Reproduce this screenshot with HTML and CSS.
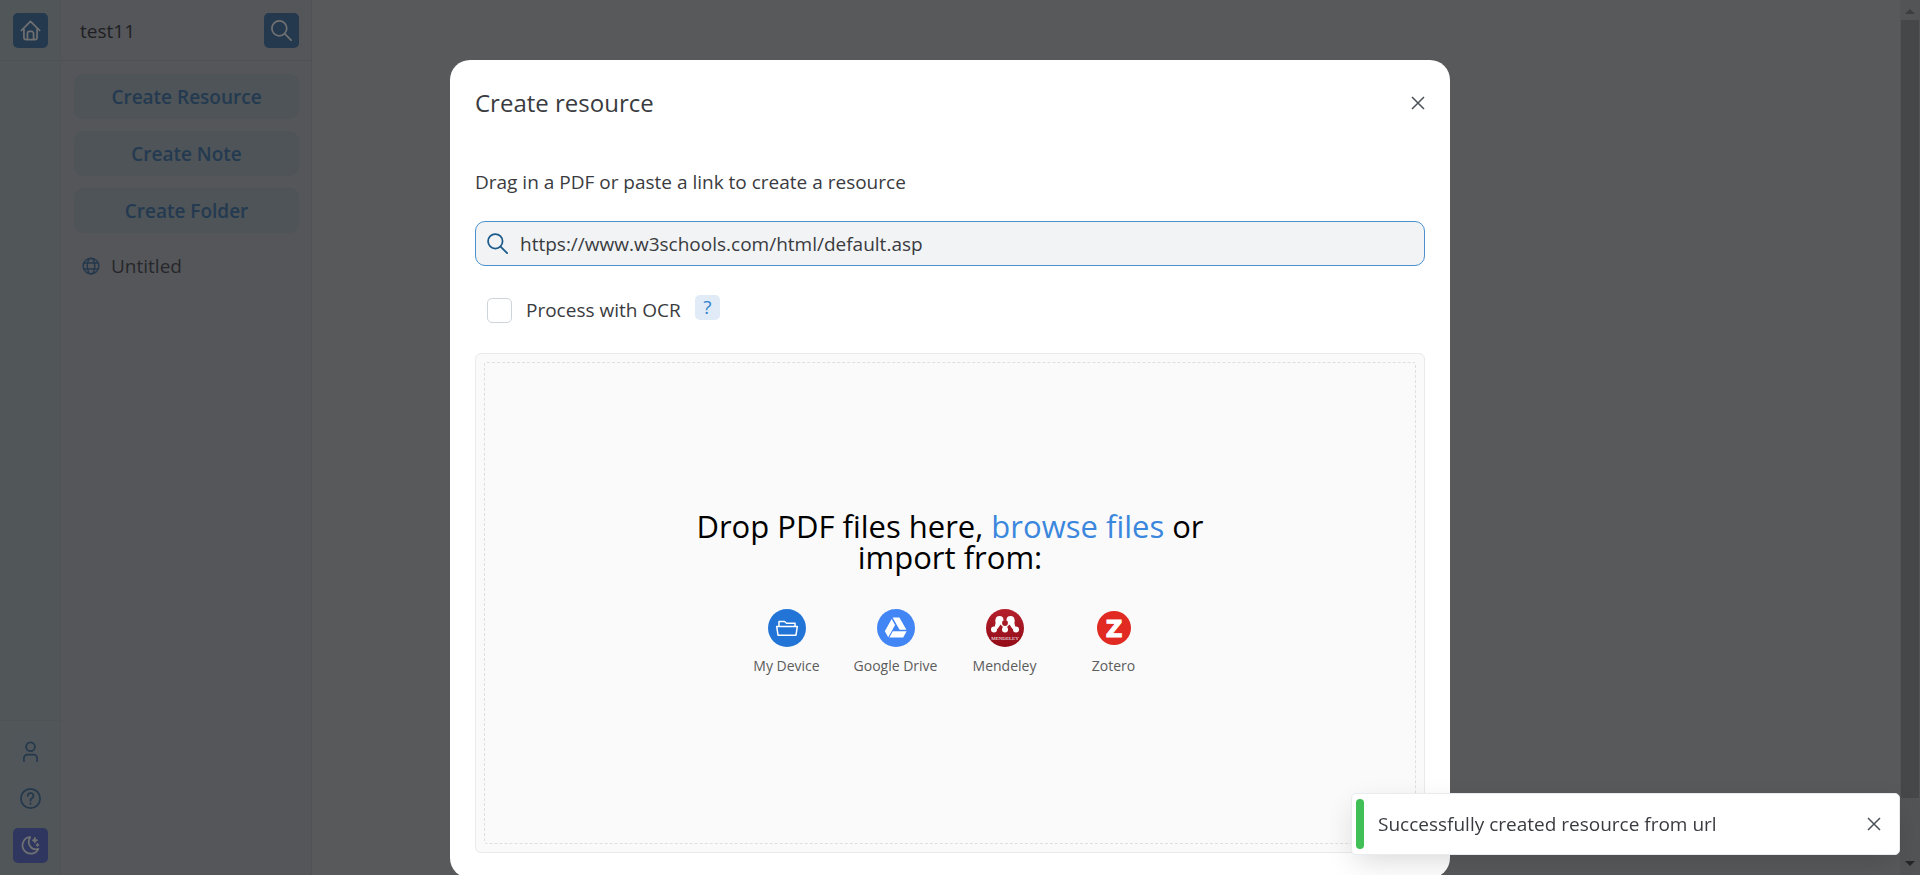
FILE: index.html
```html
<!DOCTYPE html>
<html lang="en">
<head>
<meta charset="utf-8">
<title>test11</title>
<link rel="stylesheet" href="styles.css">
</head>
<body>
<div class="app">
  <nav class="rail">
    <div class="rail-top">
      <button class="icon-btn solid" aria-label="Home">
        <svg class="icon" viewBox="0 0 24 24"><path d="M1.500 12 12 1.500 22.500 12M4.500 10v10a2.500 2.500 0 0 0 2.500 2.500h10a2.500 2.500 0 0 0 2.500-2.500V10M8.500 22v-6.500a2.500 2.500 0 0 1 2.500-2.500h2a2.500 2.500 0 0 1 2.500 2.500v6.500"/></svg>
      </button>
    </div>
    <div class="rail-bottom">
      <button class="icon-btn soft" aria-label="Profile">
        <svg class="icon" viewBox="0 0 24 24"><circle cx="12" cy="6.500" r="5"/><path d="M4.500 23v-3.500a4 4 0 0 1 4-4h7a4 4 0 0 1 4 4V23"/></svg>
      </button>
      <button class="icon-btn soft" aria-label="Help">
        <svg class="icon" viewBox="0 0 24 24"><circle cx="12" cy="12" r="11"/><path d="M8.900 9a3.200 3.200 0 1 1 4.600 2.800c-1 .5-1.500 1.200-1.500 2.700M12 17.700v.5"/></svg>
      </button>
      <button class="icon-btn night" aria-label="Dark mode">
        <svg class="icon" viewBox="0 0 24 24"><path d="M10.500 2.500A9.500 9.500 0 1 0 21 15.800 C13 18.500 7 9.500 11.700 2.500z"/><path class="fill" d="m17 2.800 1 2.200 2.200 1-2.200 1-1 2.200-1-2.200-2.200-1 2.200-1zM20 9.500l.6 1.300 1.300.6-1.300.6-.6 1.300-.6-1.300-1.300-.6 1.300-.6z"/></svg>
      </button>
    </div>
  </nav>
  <aside class="sidebar">
    <header class="side-head">
      <h1 class="project">test11</h1>
      <button class="icon-btn solid" aria-label="Search">
        <svg class="icon" viewBox="0 0 24 24"><circle cx="9.500" cy="9.500" r="8.500"/><path d="m15.800 15.800 7.200 7.200"/></svg>
      </button>
    </header>
    <div class="side-body">
      <button class="create">Create Resource</button>
      <button class="create">Create Note</button>
      <button class="create">Create Folder</button>
      <a class="item" href="#untitled">
        <svg class="globe" viewBox="0 0 24 24"><circle cx="12" cy="12" r="10.500"/><ellipse cx="12" cy="12" rx="5" ry="10.500"/><path d="M2 8h20M2 16h20"/></svg>
        Untitled
      </a>
    </div>
  </aside>
  <main class="content"></main>
  <div class="scroll" aria-hidden="true">
    <i class="arrow up"></i>
    <i class="thumb"></i>
    <i class="arrow down"></i>
  </div>
</div>

<div class="overlay">
  <section class="modal" role="dialog" aria-labelledby="modal-title">
    <header class="modal-head">
      <h2 class="modal-title" id="modal-title">Create resource</h2>
      <button class="close" aria-label="Close"><svg viewBox="0 0 12 12"><path d="m0 0 12 12M12 0 0 12"/></svg></button>
    </header>
    <label class="lead" for="url">Drag in a PDF or paste a link to create a resource</label>
    <div class="field">
      <svg class="field-icon" viewBox="0 0 24 24"><circle cx="9.500" cy="9.500" r="8.300"/><path d="m15.500 15.500 7.500 7.500"/></svg>
      <input class="url" id="url" type="text" value="https://www.w3schools.com/html/default.asp">
    </div>
    <div class="ocr">
      <input class="check" id="ocr" type="checkbox">
      <label class="ocr-label" for="ocr">Process with OCR</label>
      <button class="hint">?</button>
    </div>
    <div class="drop">
      <div class="drop-inner">
        <p class="drop-title">Drop PDF files here, <a class="browse" href="#browse">browse files</a> or import from:</p>
        <div class="sources">
          <button class="source">
            <svg class="logo" viewBox="0 0 38 38"><circle cx="19" cy="19" r="19" fill="#2275d7"/><path fill="none" stroke="#fff" stroke-width="1.500" stroke-linejoin="round" d="M11 17v-4.500h5.500l2 1.700h8.500V17M8.700 17.500h20.600L28 26.200H10z"/></svg>
            My Device
          </button>
          <button class="source">
            <svg class="logo" viewBox="0 0 38 38"><circle cx="19" cy="19" r="19" fill="#4285f4"/><g fill="#fff"><path d="M15.600 8.500h6.800l7 12.200h-6.800z"/><path d="m14.700 10 3.400 6-6.900 12.300-3.400-6z"/><path d="M15.800 22.200h13.800L26.200 28.400H12.400z"/></g></svg>
            Google Drive
          </button>
          <button class="source">
            <svg class="logo" viewBox="0 0 38 38"><defs><linearGradient id="red" x2="0" y2="1"><stop stop-color="#b4202b"/><stop offset="1" stop-color="#920c18"/></linearGradient></defs><circle cx="19" cy="19" r="19" fill="url(#red)"/><g fill="#fff"><circle cx="13.500" cy="11" r="4"/><circle cx="24.500" cy="11" r="4"/><circle cx="8" cy="20.500" r="3"/><circle cx="30" cy="20.500" r="3"/><circle cx="19" cy="20.500" r="3"/><path d="M9.500 11h19v3.500l1 4-3 1.500-3-4.500-3 3h-3l-3-3-3 4.500-3-1.500 1-4z"/></g><circle cx="19" cy="14" r="2.900" fill="#a51a25"/><path fill="#b01e29" d="M17 7h4l-2 4z"/><text x="19" y="31" fill="#fff" font-family="Liberation Serif, serif" font-size="5" text-anchor="middle">MENDELEY</text></svg>
            Mendeley
          </button>
          <button class="source">
            <svg class="logo" viewBox="0 0 38 38"><circle cx="19" cy="19" r="17" fill="#e02a22"/><text x="19" y="27.500" fill="#fff" stroke="#fff" stroke-width="1" font-family="DejaVu Sans, sans-serif" font-weight="700" font-size="23" text-anchor="middle">Z</text></svg>
            Zotero
          </button>
        </div>
      </div>
    </div>
  </section>
</div>

<div class="toast" role="status">
  <span class="toast-bar"></span>
  <span class="toast-text">Successfully created resource from url</span>
  <button class="close" aria-label="Dismiss"><svg viewBox="0 0 12 12"><path d="m0 0 12 12M12 0 0 12"/></svg></button>
</div>
</body>
</html>
```

FILE: styles.css
```css
* { box-sizing: border-box; }
body {
  margin: 0;
  height: 100vh;
  overflow: hidden;
  background: #58595b;
  color: #3a3b40;
  font: 400 19px/30px "Open Sans", sans-serif;
}
button, input { font: inherit; color: inherit; margin: 0; }
button { border: 0; padding: 0; background: none; cursor: pointer; }
svg { display: block; }

.app { display: flex; height: 100%; }
.rail {
  display: flex;
  flex-direction: column;
  justify-content: space-between;
  flex: none;
  width: 61px;
  background: #515759;
  border-right: 1px solid #4f5356;
}
.rail-top { padding: 13px 12px 12px 13px; border-bottom: 1px solid #4e5356; }
.rail-bottom {
  display: flex;
  flex-direction: column;
  gap: 12px;
  padding: 13px 12px 12px 13px;
  border-top: 1px solid #4e5356;
}
.icon-btn { display: grid; place-items: center; width: 35px; height: 35px; border-radius: 5px; }
.solid { background: #24394e; color: #6f7072; }
.soft { background: #50565a; color: #25394d; }
.night { background: #2f3760; color: #6f7072; }
.icon { width: 21px; height: 21px; fill: none; stroke: currentColor; stroke-width: 2; stroke-linecap: round; stroke-linejoin: round; }
.icon .fill { fill: currentColor; stroke-width: 1; }

.sidebar { flex: none; width: 251px; background: #55565a; border-right: 1px solid #505154; }
.side-head {
  display: flex;
  align-items: center;
  justify-content: space-between;
  padding: 13px 12px 12px 19px;
  border-bottom: 1px solid #4f5054;
}
.project { margin: 0; font-size: 19px; font-weight: 500; color: #1e1f22; }
.side-body { display: flex; flex-direction: column; gap: 12px; padding: 13px 12px 13px 13px; }
.create { height: 45px; border-radius: 10px; background: #4e5457; color: #233a51; font-weight: 600; }
.item { display: flex; align-items: center; gap: 11px; padding: 6px 8px; color: #26272b; text-decoration: none; }
.globe { width: 18px; height: 18px; fill: none; stroke: #25394d; stroke-width: 2; }
.content { flex: 1; }

.scroll {
  display: flex;
  flex-direction: column;
  align-items: center;
  width: 20px;
  background: #535456;
}
.arrow { width: 10px; border: 5px solid transparent; }
.up { border-top: 0; border-bottom-color: #3c3d3f; margin: 9px 0 6px; }
.down { border-bottom: 0; border-top-color: #262628; margin: auto 0 9px; }
.thumb { width: 18px; flex: 0 1 778px; background: #464749; }

.overlay {
  position: fixed;
  inset: 0 20px 0 0;
  display: flex;
  justify-content: center;
  align-items: flex-start;
  padding-top: 60px;
}
.modal {
  width: 100%;
  max-width: 1000px;
  padding: 25px;
  border-radius: 20px;
  background: #fff;
}
.modal-head { display: flex; align-items: center; justify-content: space-between; margin-bottom: 46px; }
.modal-title { margin: 0; font-size: 24px; line-height: 36px; font-weight: 400; }
.close { display: grid; place-items: center; width: 14px; height: 36px; color: #495057; }
.close svg { width: 12px; height: 12px; fill: none; stroke: currentColor; stroke-width: 1.5; overflow: visible; }
.lead { display: block; margin-bottom: 24px; }
.field {
  display: flex;
  align-items: center;
  gap: 12px;
  height: 45px;
  padding: 0 11px;
  border: 1px solid #4a90cf;
  border-radius: 10px;
  background: #f1f3f5;
}
.field-icon { width: 21px; height: 21px; fill: none; stroke: #1c5a8a; stroke-width: 2; stroke-linecap: round; }
.url { flex: 1; min-width: 0; padding: 0; border: 0; outline: 0; background: none; }
.ocr { display: flex; align-items: center; gap: 14px; padding: 29px 12px 28px; }
.check {
  appearance: none;
  width: 25px;
  height: 25px;
  border: 1px solid #ced4da;
  border-radius: 5px;
  background: #fff;
}
.hint {
  align-self: flex-start;
  width: 25px;
  height: 25px;
  border-radius: 5px;
  background: #e0ebf7;
  color: #3182ce;
  line-height: 25px;
}
.drop { min-height: 500px; display: grid; padding: 8px; border: 1px solid #eaeaea; border-radius: 6px; background: #fafafa; }
.drop-inner {
  display: flex;
  flex-direction: column;
  align-items: center;
  justify-content: center;
  gap: 36px;
  padding-bottom: 21px;
  border: 1px dashed #dfdfdf;
  border-radius: 3px;
}
.drop-title { max-width: 520px; margin: 0; color: #000; font-size: 31px; line-height: 31px; text-align: center; }
.browse { color: #3b87dd; text-decoration: none; }
.sources { display: grid; grid-template-columns: repeat(4, 109px); }
.source {
  display: flex;
  flex-direction: column;
  align-items: center;
  gap: 10px;
  color: #5c5c5c;
  font-size: 14px;
  line-height: 18px;
}
.logo { width: 38px; height: 38px; }

.toast {
  position: fixed;
  right: 20px;
  bottom: 20px;
  display: flex;
  align-items: center;
  width: 549px;
  height: 62px;
  padding: 5px 18px 5px 4px;
  border: 1px solid #e9ecef;
  border-radius: 5px;
  background: #fff;
  box-shadow: 0 10px 30px -5px rgba(0, 0, 0, 0.16);
}
.toast-bar { align-self: stretch; width: 8px; border-radius: 4px; background: #40c057; }
.toast-text { flex: 1; padding-left: 14px; }
```
